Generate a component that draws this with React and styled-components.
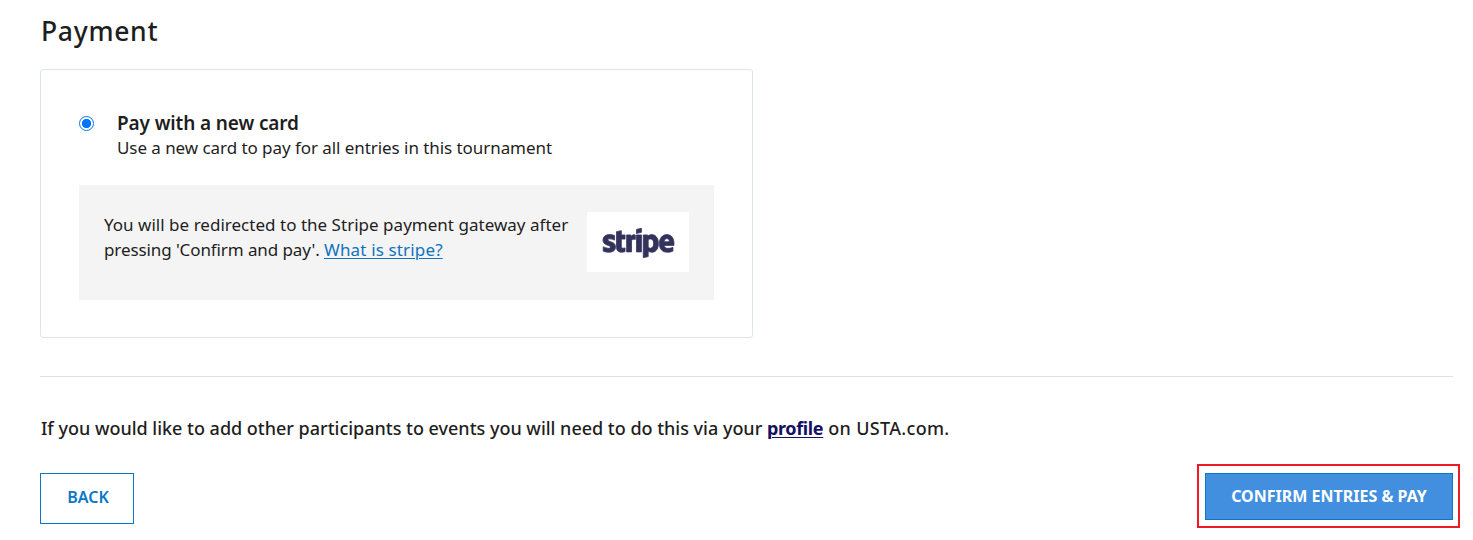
import React, { useState } from 'react'
import styled, { createGlobalStyle } from 'styled-components'
import { FaStripe } from 'react-icons/fa'

const GlobalStyle = createGlobalStyle`
    *, *::before, *::after {
        box-sizing: border-box;
    }

    body {
        margin: 0;
        background-color: #fff;
        color: #1e1e1e;
        font-family: 'Noto Sans', 'Open Sans', sans-serif;
        overflow: hidden;
    }
`

const Container = styled.main`
    height: 540px;
    padding: 12px 20px 0 40px;
`

const Title = styled.h2`
    margin: 0 0 19px;
    padding-left: 1px;
    font-size: 26.5px;
    font-weight: 500;
    line-height: 38px;
    letter-spacing: 0.7px;
`

const Card = styled.section`
    width: 713px;
    height: 269px;
    padding: 41px 38px 0;
    border: 1px solid #dfe3ee;
    border-radius: 3px;
`

const Option = styled.label`
    display: flex;
    gap: 23px;
    cursor: pointer;
`

const Radio = styled.input`
    width: 15px;
    height: 15px;
    margin: 5px 0 0;
    appearance: none;
    border: 1px solid #0075ff;
    border-radius: 50%;
    background-color: #fff;

    &:checked {
        background-image: radial-gradient(circle, #0075ff 4.3px, transparent 5px);
    }
`

const OptionTitle = styled.div`
    font-size: 19px;
    font-weight: 600;
    line-height: 25px;
    letter-spacing: -0.12px;
`

const OptionText = styled.div`
    margin-top: -1px;
    font-size: 17px;
    line-height: 25px;
    letter-spacing: -0.06px;
`

const Notice = styled.div`
    display: flex;
    justify-content: space-between;
    height: 115px;
    margin-top: 25px;
    padding: 27px 25px 0;
    background-color: #f4f4f4;
`

const NoticeText = styled.p`
    margin: 0;
    font-size: 17px;
    line-height: 25px;
    white-space: nowrap;
    letter-spacing: 0.02px;
`

const ActionName = styled.span`
    letter-spacing: -0.1px;
`

const Link = styled.a`
    color: ${({ $dark }) => ($dark ? '#15105f' : '#0f73c0')};
    font-weight: ${({ $dark }) => ($dark ? 700 : 400)};
    letter-spacing: ${({ $dark }) => ($dark ? '-0.35px' : '0.15px')};
    text-decoration: underline;
    text-decoration-thickness: 1px;
    text-underline-offset: 2px;
`

const Logo = styled.div`
    display: flex;
    align-items: center;
    justify-content: center;
    width: 102px;
    height: 60px;
    background-color: #fff;
    color: #32325d;

    svg {
        width: 71px;
        height: 60px;
        margin: 1px 0 0;
        stroke: #32325d;
        stroke-width: 7px;
        overflow: visible;
    }
`

const Divider = styled.hr`
    height: 1px;
    margin: 38px 0 39px;
    border: 0;
    background-color: #e1e1e1;
`

const Info = styled.p`
    margin: 0;
    padding-left: 1px;
    font-size: 18px;
    font-weight: 500;
    line-height: 25px;
    white-space: nowrap;
    letter-spacing: -0.01px;
`

const Domain = styled.span`
    letter-spacing: 0.32px;
`

const Actions = styled.section`
    display: flex;
    align-items: flex-start;
    justify-content: space-between;
    margin-top: 32px;
`

const Button = styled.button`
    width: ${({ $primary }) => ($primary ? '248px' : '94px')};
    height: ${({ $primary }) => ($primary ? '47px' : '51px')};
    padding: ${({ $primary }) => ($primary ? '0 0 1px' : '0 0 3px 2px')};
    border: 1px solid #0a78c6;
    background-color: ${({ $primary }) => ($primary ? '#418fde' : '#fff')};
    color: ${({ $primary }) => ($primary ? '#fff' : '#0a78c6')};
    font-family: inherit;
    font-size: 16px;
    font-weight: ${({ $primary }) => ($primary ? 700 : 600)};
    white-space: nowrap;
    cursor: pointer;
`

const Highlight = styled.div`
    margin: -9px -7px 0 0;
    padding: 7px 5px 6px 6px;
    border: 2px solid #ed1c24;
`

function App() {
    const [method, setMethod] = useState('new')

    return (
        <Container>
            <GlobalStyle />
            <Title>Payment</Title>
            <Card>
                <Option>
                    <Radio
                        type="radio"
                        name="method"
                        checked={method === 'new'}
                        onChange={() => setMethod('new')}
                    />
                    <div>
                        <OptionTitle>Pay with a new card</OptionTitle>
                        <OptionText>Use a new card to pay for all entries in this tournament</OptionText>
                    </div>
                </Option>
                <Notice>
                    <NoticeText>
                        You will be redirected to the Stripe payment gateway after
                        <br />
                        <ActionName>pressing 'Confirm and pay'. </ActionName>
                        <Link href="#">What is stripe?</Link>
                    </NoticeText>
                    <Logo>
                        <FaStripe />
                    </Logo>
                </Notice>
            </Card>
            <Divider />
            <Info>
                If you would like to add other participants to events you will need to do this via your{' '}
                <Link href="#" $dark>profile</Link>
                <Domain> on USTA.com.</Domain>
            </Info>
            <Actions>
                <Button type="button">BACK</Button>
                <Highlight>
                    <Button type="button" $primary>CONFIRM ENTRIES &amp; PAY</Button>
                </Highlight>
            </Actions>
        </Container>
    )
}

export default App
